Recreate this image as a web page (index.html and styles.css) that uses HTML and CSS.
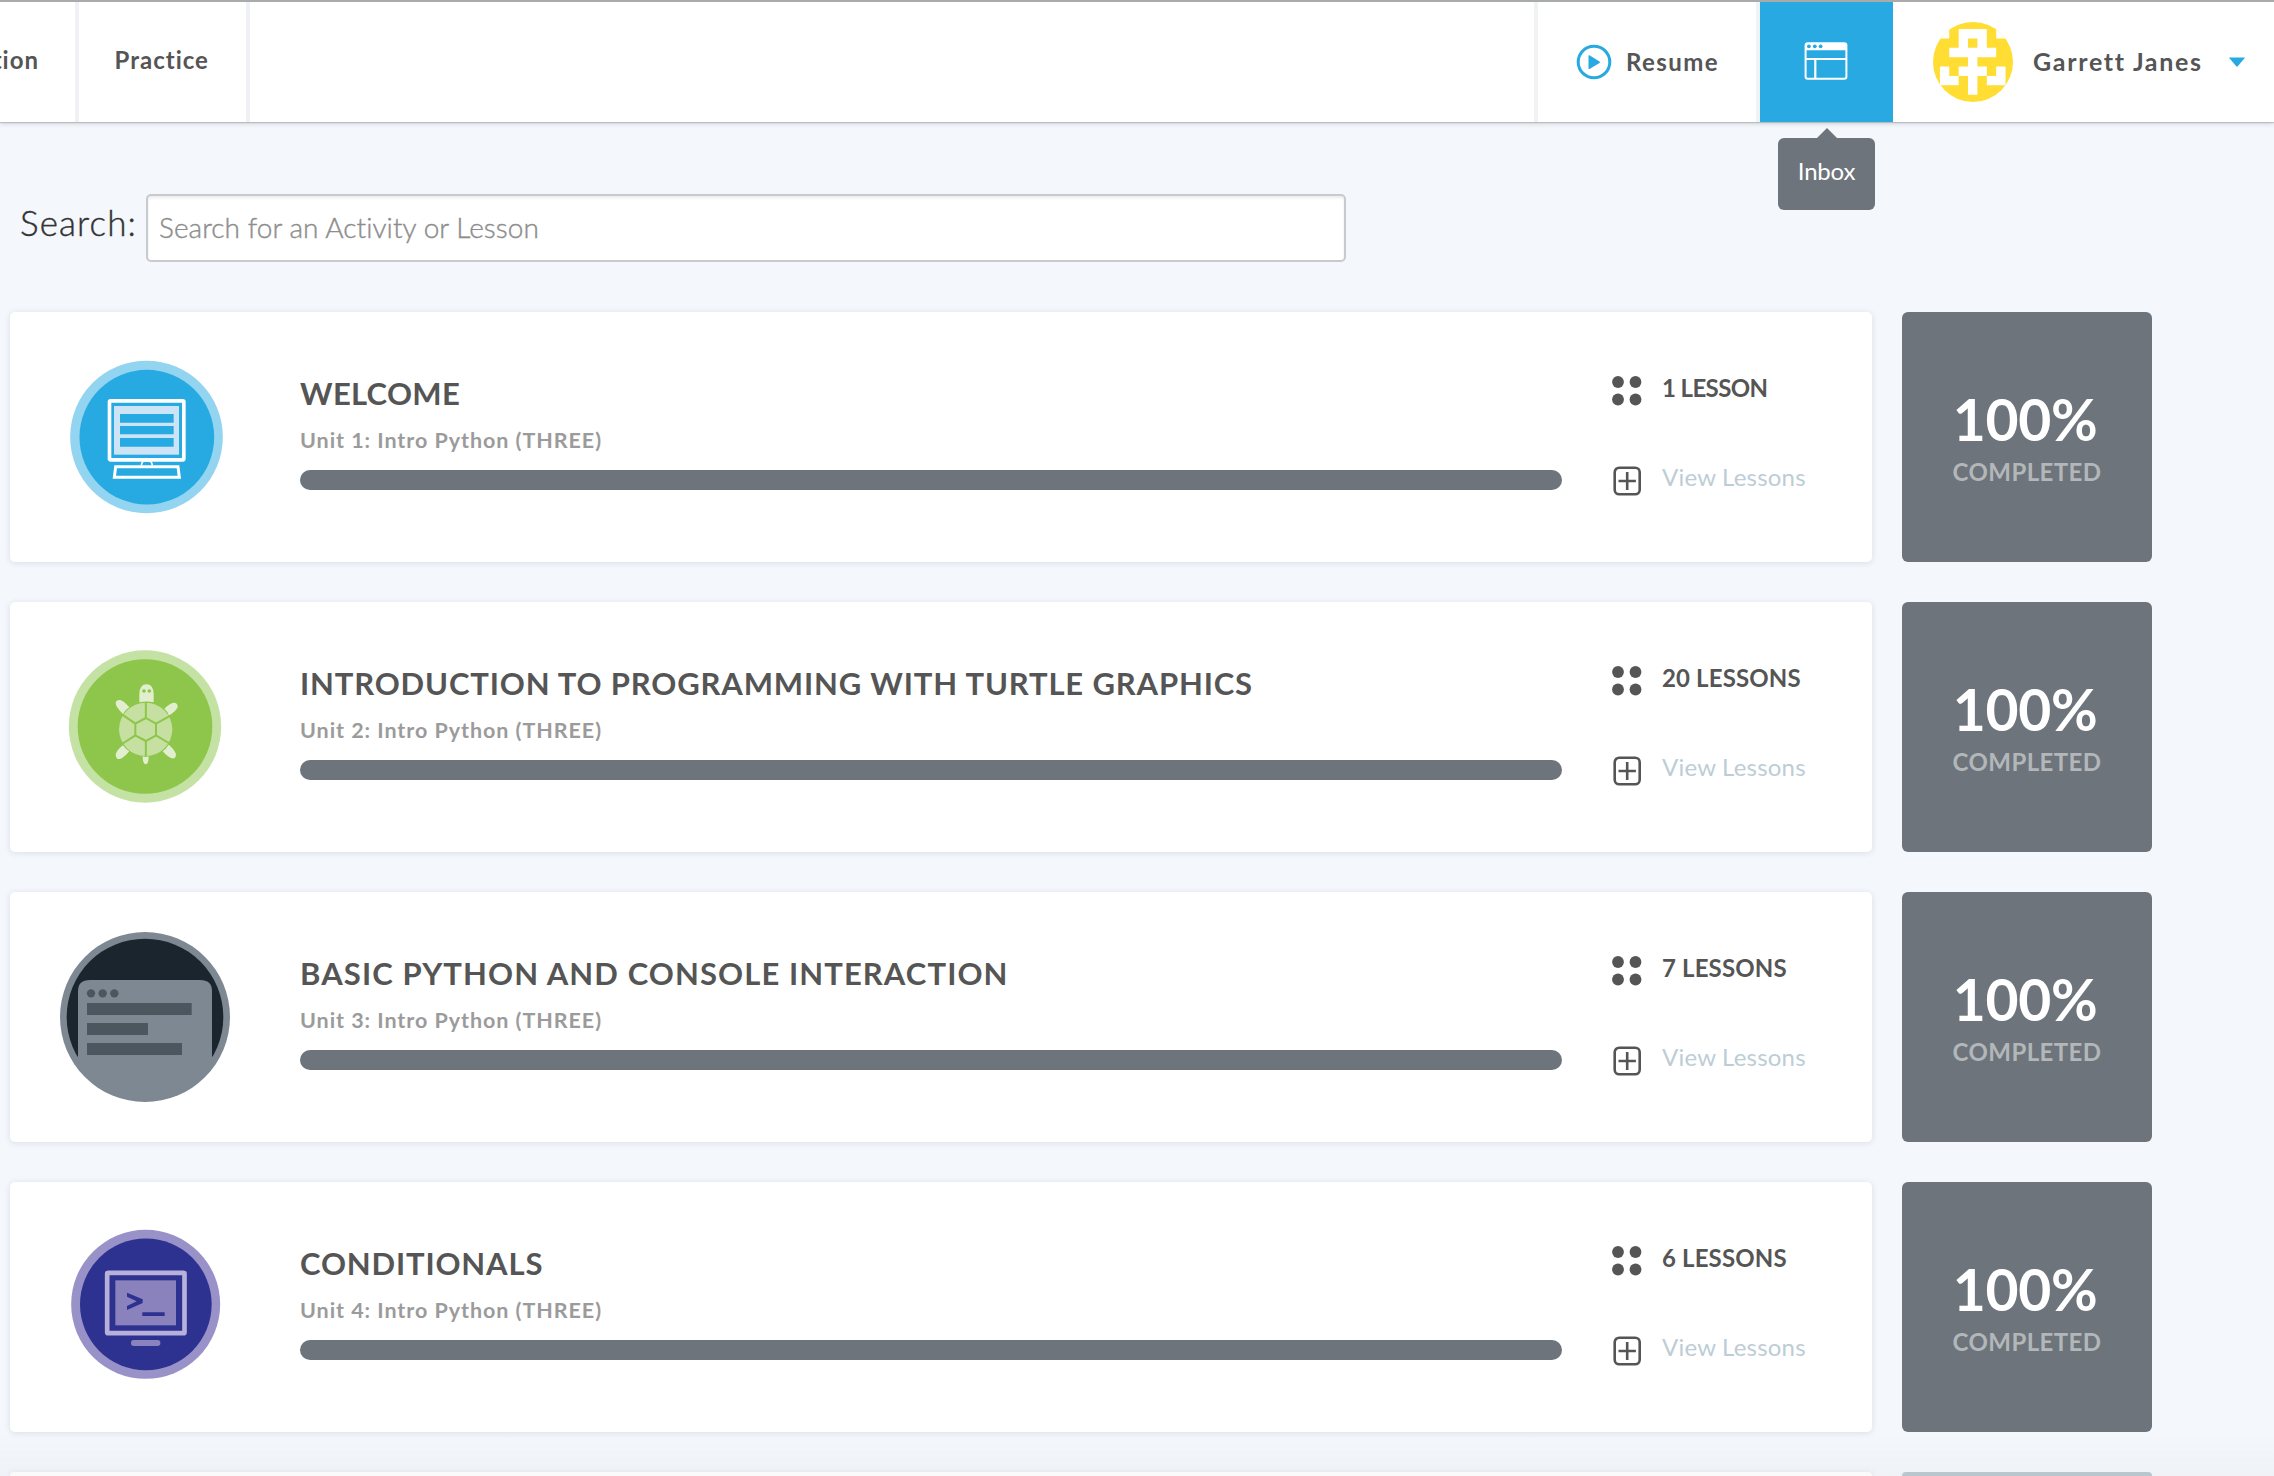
FILE: index.html
```html
<!DOCTYPE html>
<html lang="en">
<head>
<meta charset="utf-8">
<title>Lessons</title>
<link rel="stylesheet" href="styles.css">
</head>
<body>
<svg class="defs" aria-hidden="true">
  <symbol id="dots" viewBox="0 0 30 30"><g fill="#555"><circle cx="6" cy="6" r="5.9"/><circle cx="23.5" cy="6" r="5.9"/><circle cx="6" cy="23.5" r="5.9"/><circle cx="23.5" cy="23.5" r="5.9"/></g></symbol>
  <symbol id="plus" viewBox="0 0 30 30"><g fill="none" stroke="#555" stroke-width="2.6"><rect x="2.700" y="1.7" width="25" height="26.6" rx="4.5"/><path d="M15.200 6v18M6.500 15h17.4"/></g></symbol>
</svg>
<header class="topbar">
  <nav class="nav">
    <a class="nav-item nav-first">tion</a>
    <a class="nav-item nav-practice">Practice</a>
  </nav>
  <div class="tools">
    <a class="resume">
      <svg width="36" height="36" viewBox="0 0 36 36"><circle cx="18" cy="18" r="15.8" fill="none" stroke="#29a9e1" stroke-width="3"/><path d="M12.5 11.8v12.6q0 1 1 .5l10-5.8q1-.8 0-1.5l-10-6.3q-1-.5-1 .5z" fill="#29a9e1"/></svg>
      <span>Resume</span>
    </a>
    <a class="inbox">
      <svg width="44" height="38" viewBox="0 0 44 38"><rect x="1.6" y="1.2" width="40.8" height="35.6" rx="2" fill="none" stroke="#fff" stroke-width="2"/><path d="M1.5 1.5h41V8.3h-41zM1.5 16h41v2h-41zM10.2 17.5h2.2V36.500h-2.200z" fill="#fff"/><g fill="#29a9e1"><circle cx="4.900" cy="4.300" r="1.9"/><circle cx="10.800" cy="4.300" r="1.9"/><circle cx="16.600" cy="4.300" r="1.9"/></g></svg>
      <span class="tooltip">Inbox</span>
    </a>
    <a class="user">
      <svg width="80" height="80" viewBox="0 0 80 80"><defs><clipPath id="round"><circle cx="40" cy="40" r="40"/></clipPath></defs>
        <g clip-path="url(#round)"><rect width="80" height="80" fill="#ffdd33"/>
        <g transform="translate(6.900 7) scale(9.380)" fill="#fff"><path d="M-1-1H1V1H-1zM6-1H8V1H6zM2 0H5V2H6V3H4V4H5V5H4V7H3V5H2V4H3V3H1V2H2zM3 1V2H4V1zM0 4H1V5H2V6H0zM6 4H7V6H5V5H6z" fill-rule="evenodd"/></g></g></svg>
      <span class="name">Garrett Janes</span>
      <svg class="caret" width="16" height="10" viewBox="0 0 16 10"><path d="M.5.500h15q.5 0 0 .800L9 9q-1 1-2 0L.5 1.300z" fill="#29a9e1"/></svg>
    </a>
  </div>
</header>
<main>
  <div class="search">
    <label for="q">Search:</label>
    <input id="q" type="text" placeholder="Search for an Activity or Lesson">
  </div>

  <section class="row">
    <article class="card">
      <svg class="badge" viewBox="0 0 660 630">
        <circle cx="319.500" cy="321" r="229" fill="#93d4f0"/><circle cx="320.500" cy="321.500" r="202" fill="#27a9e1"/>
        <rect x="208.500" y="212.500" width="223" height="177" rx="3" fill="none" stroke="#fff" stroke-width="11"/>
        <rect x="222" y="228" width="195" height="146" fill="#cde4f7"/>
        <path d="M240 252h161v26H240zM240 288h161v25H240zM240 324h161v26H240z" fill="#27a9e1"/>
        <path d="M304 406q2-13 9-13h14q8 0 10 13" fill="none" stroke="#fff" stroke-width="5"/>
        <path d="M227 410h187l4 32H223z" fill="none" stroke="#fff" stroke-width="9"/>
      </svg>
      <div class="info"><h2 class="tight">WELCOME</h2><p>Unit 1: Intro Python (THREE)</p><div class="bar"></div></div>
      <div class="meta"><div class="count count-one"><svg><use href="#dots"/></svg><span>1 LESSON</span></div><a class="view"><svg><use href="#plus"/></svg><span>View Lessons</span></a></div>
    </article>
    <aside class="score"><b>100%</b><span>COMPLETED</span></aside>
  </section>

  <section class="row">
    <article class="card">
      <svg class="badge" viewBox="0 0 660 630">
        <circle cx="315" cy="319.500" r="228.500" fill="#c5e2a5"/><circle cx="315" cy="319.500" r="202" fill="#8dc64b"/>
        <g fill="#e1efcf">
          <path d="M298 247V222Q299 193 319.500 193T341 222V247Q319 242 298 247z"/>
          <path d="M249 282Q229 262 227 251Q227 239 240 240Q252 243 268 262Q257 268 249 282z"/>
          <path d="M387 287Q408 274 413 262Q414 247 400 248Q388 251 373 266Q384 275 387 287z"/>
          <path d="M249 376Q229 391 227 404Q228 419 240 417Q252 413 268 394Q257 388 249 376z"/>
          <path d="M386 374Q406 391 408 404Q407 417 395 415Q383 411 368 394Q378 387 386 374z"/>
          <path d="M308 409Q317 412 326 409Q326 432 317.500 433Q308 432 308 409z"/>
        </g>
        <circle cx="317" cy="328" r="80" fill="#c5e0a0"/>
        <g fill="none" stroke="#8dc64b" stroke-width="6"><path d="M317.500 294L348 311V346L317.500 363L286 346V311zM317.500 294V246M348 311L393 286M348 346L391 372M317.500 363V409M286 346L246 372M286 311L247 284"/></g>
        <circle cx="312" cy="213" r="5.500" fill="#8dc64b"/><circle cx="328" cy="213" r="5.500" fill="#8dc64b"/>
      </svg>
      <div class="info"><h2>INTRODUCTION TO PROGRAMMING WITH TURTLE GRAPHICS</h2><p>Unit 2: Intro Python (THREE)</p><div class="bar"></div></div>
      <div class="meta"><div class="count"><svg><use href="#dots"/></svg><span>20 LESSONS</span></div><a class="view"><svg><use href="#plus"/></svg><span>View Lessons</span></a></div>
    </article>
    <aside class="score"><b>100%</b><span>COMPLETED</span></aside>
  </section>

  <section class="row">
    <article class="card">
      <svg class="badge" viewBox="0 0 660 630">
        <circle cx="315" cy="321" r="255" fill="#7e8892"/><circle cx="315" cy="321" r="235" fill="#1b252e"/>
        <path d="M114 440V243Q114 210 150 210H480Q516 210 516 243V440H527A243 243 0 0 1 103 440z" fill="#7e8892"/>
        <g fill="#4c565f"><circle cx="153" cy="250" r="12.500"/><circle cx="188" cy="250" r="12.500"/><circle cx="223" cy="250" r="12.500"/><path d="M141 279H455V315H141zM141 339H324V375H141zM141 399H426V435H141z"/></g>
      </svg>
      <div class="info"><h2 class="wide">BASIC PYTHON AND CONSOLE INTERACTION</h2><p>Unit 3: Intro Python (THREE)</p><div class="bar"></div></div>
      <div class="meta"><div class="count"><svg><use href="#dots"/></svg><span>7 LESSONS</span></div><a class="view"><svg><use href="#plus"/></svg><span>View Lessons</span></a></div>
    </article>
    <aside class="score"><b>100%</b><span>COMPLETED</span></aside>
  </section>

  <section class="row">
    <article class="card">
      <svg class="badge" viewBox="0 -30 660 630">
        <circle cx="317" cy="283" r="223.500" fill="#9992c8"/><circle cx="317.500" cy="283" r="197.500" fill="#2d3190"/>
        <rect x="201.500" y="188.500" width="232" height="181" rx="3" fill="none" stroke="#b7b0db" stroke-width="14"/>
        <rect x="226" y="211" width="182" height="135" fill="#8a82bd"/>
        <path d="M261 248L308 268V279L261 300V288L290 274L261 260zM307 307H374V318H307z" fill="#2d3190"/>
        <rect x="273" y="390" width="88" height="18" rx="8" fill="#8a82bd"/>
      </svg>
      <div class="info"><h2>CONDITIONALS</h2><p>Unit 4: Intro Python (THREE)</p><div class="bar"></div></div>
      <div class="meta"><div class="count"><svg><use href="#dots"/></svg><span>6 LESSONS</span></div><a class="view"><svg><use href="#plus"/></svg><span>View Lessons</span></a></div>
    </article>
    <aside class="score"><b>100%</b><span>COMPLETED</span></aside>
  </section>

  <section class="row row-next">
    <article class="card"></article>
    <aside class="score score-next"></aside>
  </section>
</main>
<div class="fade"></div>
</body>
</html>
```

FILE: styles.css
```css
* { box-sizing: border-box; }
body {
  margin: 0;
  height: 1476px;
  overflow: hidden;
  background: #f4f7fc;
  color: #555;
  font-family: Lato, "Liberation Sans", sans-serif;
  font-variant-ligatures: none;
}
svg { display: block; flex: none; }
.defs { position: absolute; width: 0; height: 0; }

.topbar {
  position: relative;
  display: flex;
  justify-content: space-between;
  height: 122px;
  border-top: 2px solid #a9abab;
  background: #fff;
  box-shadow: 0 1px 1px rgba(0, 0, 0, .16), 0 2px 5px rgba(0, 0, 0, .13);
  font-size: 24px;
  font-weight: 700;
}
.nav, .tools { display: flex; }
.nav-item {
  display: flex;
  align-items: center;
  padding-bottom: 5px;
  border-right: 4px solid #eff1f4;
  letter-spacing: 1px;
}
.nav-first { width: 79px; justify-content: flex-end; padding-right: 36px; overflow: hidden; }
.nav-practice { width: 171px; padding-left: 35.5px; }
.resume {
  display: flex;
  align-items: center;
  gap: 14px;
  width: 226px;
  padding-left: 38px;
  border: solid #eff3f6;
  border-width: 0 4px;
  letter-spacing: 1.4px;
}
.resume span, .name { padding-bottom: 2px; }
.inbox {
  position: relative;
  display: flex;
  align-items: center;
  justify-content: center;
  width: 133px;
  padding: 0 2px 3px 0;
  background: #29a9e1;
}
.tooltip {
  position: absolute;
  top: 136px;
  left: 18px;
  width: 97px;
  height: 72px;
  border-radius: 6px;
  background: #6d747b;
  color: #fff;
  font-weight: 400;
  line-height: 66px;
  text-align: center;
  letter-spacing: -.2px;
}
.tooltip::before {
  content: "";
  position: absolute;
  top: -10px;
  left: 39px;
  border: solid transparent;
  border-width: 0 10px 10px;
  border-bottom-color: #6d747b;
}
.user { display: flex; align-items: center; width: 381px; padding-left: 40px; }
.name { width: 196px; margin-left: 20px; font-size: 25px; letter-spacing: 1.7px; white-space: nowrap; }
.caret { margin: 0 0 1px; }

.search { display: flex; height: 190px; padding: 72px 0 0 20px; }
.search label {
  width: 126px;
  color: #333;
  font-size: 35px;
  font-weight: 300;
  line-height: 57px;
  letter-spacing: 1.1px;
  -webkit-text-stroke: .4px;
}
.search input {
  width: 1200px;
  height: 68px;
  padding: 0 11px 2px;
  border: 2px solid #c9cacb;
  border-radius: 5px;
  background: #fff;
  box-shadow: inset 0 2px 3px rgba(0, 0, 0, .08);
  font: 300 28px Lato, sans-serif;
  letter-spacing: .06px;
}
.search input::placeholder { color: #8d8d8d; opacity: 1; -webkit-text-stroke: .4px; }

.row { display: flex; gap: 30px; height: 250px; margin: 0 0 40px 10px; }
.card {
  display: flex;
  width: 1862px;
  border-radius: 5px;
  background: #fff;
  box-shadow: 0 1px 6px rgba(60, 80, 100, .14);
}
.badge { width: 220px; height: 210px; margin: 18px 0 0 30px; }
.info { width: 1262px; margin: 61px 0 0 40px; }
h2 { margin: 0; font-size: 31px; font-weight: 700; line-height: 40px; letter-spacing: .85px; white-space: nowrap; }
h2.wide { letter-spacing: 1.1px; }
h2.tight { letter-spacing: .3px; }
.info p { margin: 12px 0 0; color: #9b9b9b; font-size: 21.5px; font-weight: 700; line-height: 31px; letter-spacing: .95px; }
.bar { height: 20px; margin-top: 14px; border-radius: 10px; background: #6d747b; }
.meta { margin: 61px 0 0 50px; font-size: 24px; line-height: 30px; }
.meta svg { width: 30px; height: 30px; margin-top: 3px; }
.count, .view { display: flex; gap: 20px; height: 30px; }
.count { font-weight: 700; letter-spacing: .15px; }
.count-one { letter-spacing: -.6px; }
.view { margin-top: 59px; color: #bdcdd6; letter-spacing: .2px; }
.view svg { margin-top: 4px; }

.score {
  display: flex;
  flex-direction: column;
  align-items: center;
  width: 250px;
  padding-top: 77px;
  border-radius: 6px;
  background: #6d747b;
  color: #b3b7ba;
}
.score b { margin-left: -4px; color: #fff; font-size: 57px; line-height: 60px; letter-spacing: -.3px; }
.score span { margin-top: 8px; font-size: 24px; font-weight: 700; line-height: 30px; letter-spacing: .4px; }
.row-next { height: 4px; margin-bottom: 0; }
.row-next > * { border-radius: 5px 5px 0 0; }
.score-next { padding: 0; background: #bccad2; }
.fade {
  position: fixed;
  inset: auto 0 0;
  height: 44px;
  background: linear-gradient(transparent, rgba(60, 40, 40, .025));
  pointer-events: none;
}
```
